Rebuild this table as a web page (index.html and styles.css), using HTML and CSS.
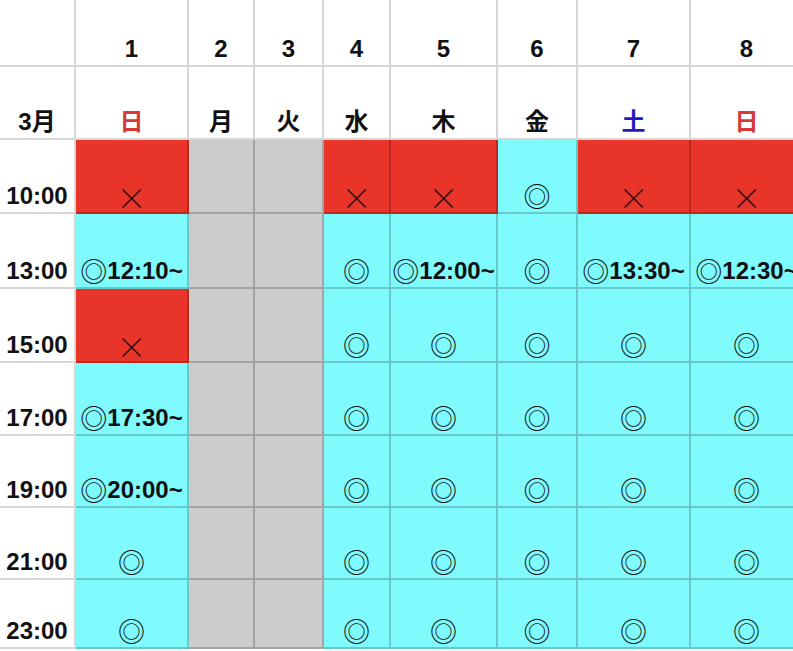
FILE: index.html
```html
<!DOCTYPE html>
<html lang="ja">
<head>
<meta charset="utf-8">
<title>3月 予定表</title>
<link rel="stylesheet" href="styles.css">
</head>
<body>
<div class="sheet">
  <div class="c"></div>
  <div class="c">1</div><div class="c">2</div><div class="c">3</div><div class="c">4</div>
  <div class="c">5</div><div class="c">6</div><div class="c">7</div><div class="c">8</div>

  <div class="c">3月</div>
  <div class="c sun">日</div><div class="c">月</div><div class="c">火</div><div class="c">水</div>
  <div class="c">木</div><div class="c">金</div><div class="c sat">土</div><div class="c sun">日</div>

  <div class="c t">10:00</div>
  <div class="c r"><span class="x">×</span></div>
  <div class="c g"></div><div class="c g"></div>
  <div class="c r"><span class="x">×</span></div>
  <div class="c r"><span class="x">×</span></div>
  <div class="c y"><span class="mk">◎</span></div>
  <div class="c r"><span class="x">×</span></div>
  <div class="c r"><span class="x">×</span></div>

  <div class="c t">13:00</div>
  <div class="c y"><span class="mk">◎</span>12:10~</div>
  <div class="c g"></div><div class="c g"></div>
  <div class="c y"><span class="mk">◎</span></div>
  <div class="c y"><span class="mk">◎</span>12:00~</div>
  <div class="c y"><span class="mk">◎</span></div>
  <div class="c y"><span class="mk">◎</span>13:30~</div>
  <div class="c y"><span class="mk">◎</span>12:30~</div>

  <div class="c t">15:00</div>
  <div class="c r"><span class="x">×</span></div>
  <div class="c g"></div><div class="c g"></div>
  <div class="c y"><span class="mk">◎</span></div>
  <div class="c y"><span class="mk">◎</span></div>
  <div class="c y"><span class="mk">◎</span></div>
  <div class="c y"><span class="mk">◎</span></div>
  <div class="c y"><span class="mk">◎</span></div>

  <div class="c t">17:00</div>
  <div class="c y"><span class="mk">◎</span>17:30~</div>
  <div class="c g"></div><div class="c g"></div>
  <div class="c y"><span class="mk">◎</span></div>
  <div class="c y"><span class="mk">◎</span></div>
  <div class="c y"><span class="mk">◎</span></div>
  <div class="c y"><span class="mk">◎</span></div>
  <div class="c y"><span class="mk">◎</span></div>

  <div class="c t">19:00</div>
  <div class="c y"><span class="mk">◎</span>20:00~</div>
  <div class="c g"></div><div class="c g"></div>
  <div class="c y"><span class="mk">◎</span></div>
  <div class="c y"><span class="mk">◎</span></div>
  <div class="c y"><span class="mk">◎</span></div>
  <div class="c y"><span class="mk">◎</span></div>
  <div class="c y"><span class="mk">◎</span></div>

  <div class="c t">21:00</div>
  <div class="c y"><span class="mk">◎</span></div>
  <div class="c g"></div><div class="c g"></div>
  <div class="c y"><span class="mk">◎</span></div>
  <div class="c y"><span class="mk">◎</span></div>
  <div class="c y"><span class="mk">◎</span></div>
  <div class="c y"><span class="mk">◎</span></div>
  <div class="c y"><span class="mk">◎</span></div>

  <div class="c t">23:00</div>
  <div class="c y"><span class="mk">◎</span></div>
  <div class="c g"></div><div class="c g"></div>
  <div class="c y"><span class="mk">◎</span></div>
  <div class="c y"><span class="mk">◎</span></div>
  <div class="c y"><span class="mk">◎</span></div>
  <div class="c y"><span class="mk">◎</span></div>
  <div class="c y"><span class="mk">◎</span></div>
</div>
</body>
</html>
```

FILE: styles.css
```css
html, body {
  margin: 0;
  padding: 0;
  background: #ffffff;
}
body {
  overflow: hidden;
  font-family: "Liberation Sans", "Noto Sans CJK JP", sans-serif;
  font-weight: bold;
  font-size: 24px;
  color: #111111;
}
.sheet {
  display: grid;
  grid-template-columns: 76px 113px 66px 69px 67px 107px 80px 113px 113px;
  grid-template-rows: 67px 73px 74px 75px 74px 73px 72px 72px 69px;
  width: max-content;
}
.c {
  box-sizing: border-box;
  border-right: 2px solid #d6d6d6;
  border-bottom: 2px solid #d6d6d6;
  display: flex;
  align-items: flex-end;
  justify-content: center;
  padding-bottom: 4px;
  line-height: 24px;
  white-space: nowrap;
}
.r {
  background: #e9342a;
  border-color: rgba(0, 0, 0, 0.2);
}
.g {
  background: #cccccc;
  border-color: rgba(0, 0, 0, 0.2);
}
.y {
  background: #80fbfd;
  border-color: rgba(0, 0, 0, 0.2);
}
.sun {
  color: #d63a36;
}
.sat {
  color: #1c1cc0;
}
.mk {
  font-family: "Noto Sans CJK JP", sans-serif;
  font-weight: 400;
  font-size: 27px;
  line-height: 24px;
  color: #111111;
}
.x {
  font-family: "Noto Sans CJK JP", sans-serif;
  font-weight: 300;
  font-size: 30px;
  line-height: 24px;
  color: #2a1010;
}
```
